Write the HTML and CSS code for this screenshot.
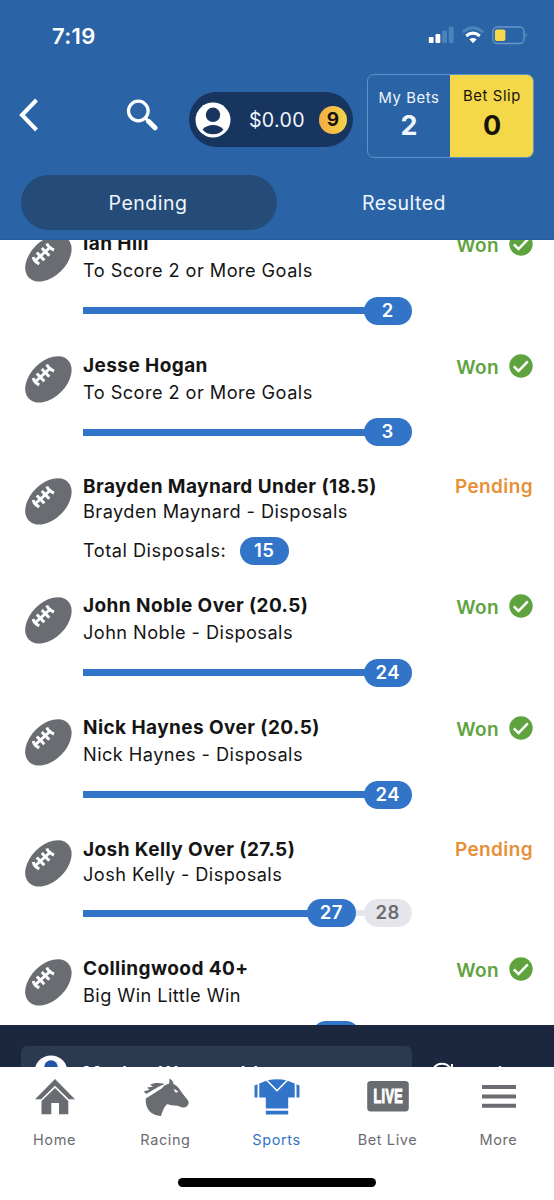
FILE: index.html
```html
<!DOCTYPE html>
<html lang="en">
<head>
<meta charset="utf-8">
<title>My Bets</title>
<link rel="stylesheet" href="styles.css">
</head>
<body>
<svg class="defs" width="0" height="0">
  <defs>
    <symbol id="ball" viewBox="0 0 47 47">
      <ellipse cx="23.400" cy="23.400" rx="27.500" ry="17.900" transform="rotate(-45 23.400 23.400)" fill="#696c71"/>
      <g stroke="#fff" stroke-width="3" fill="none">
        <path d="M10.500 25.500L26 11.500"/>
        <path d="M8.300 22Q9 26.500 14.300 28.800"/>
        <path d="M11.800 17.500L19.300 25.300"/>
        <path d="M16.800 13L24.300 20.800"/>
        <path d="M21.800 8.500Q23.500 13 29 15"/>
      </g>
    </symbol>
    <symbol id="check" viewBox="0 0 24 24">
      <circle cx="12" cy="12" r="11.700" fill="#5fa33f"/>
      <path d="M4.800 12.400L9.500 17L18.800 7.300" stroke="#fff" stroke-width="2.500" fill="none"/>
    </symbol>
    <symbol id="user" viewBox="0 0 36 36">
      <circle cx="18" cy="18" r="17.500" fill="#fff"/>
      <circle cx="18" cy="12.800" r="7.200" fill="currentColor"/>
      <path d="M7.500 27.500C10 24.500 14 23 18 23S26 24.500 28.500 27.500C26 31 22 32.300 18 32.300S10 31 7.500 27.500Z" fill="currentColor"/>
    </symbol>
  </defs>
</svg>
<div class="phone">
  <header class="header">
    <div class="status-bar">
      <span class="time">7:19</span>
      <svg class="signals" width="100" height="20" viewBox="0 0 100 20">
        <g fill="#fff"><rect x="0.800" y="12" width="4.800" height="6" rx="1"/><rect x="7.500" y="9" width="4.800" height="9" rx="1"/></g>
        <g fill="#4c83ba"><rect x="14.200" y="5.500" width="4.800" height="12.500" rx="1"/><rect x="20.800" y="1.500" width="4.800" height="16.500" rx="1"/></g>
        <g fill="none"><path d="M34.800 7.200Q45 -1.500 55.200 7.200" stroke="#4c83ba" stroke-width="3"/><path d="M38.200 11Q45 5.200 51.800 11" stroke="#fff" stroke-width="3"/></g>
        <path d="M41.400 14.300Q45 11.600 48.600 14.300L45 18.300Z" fill="#fff"/>
        <rect x="64.800" y="2" width="31.200" height="16.500" rx="4.500" fill="none" stroke="#6796c6" stroke-width="1.300"/>
        <rect x="66.900" y="4.500" width="10.500" height="11.500" rx="2" fill="#f4d849"/>
        <path d="M97.600 7.700Q99.900 10.200 97.600 12.700Z" fill="#6796c6"/>
      </svg>
    </div>
    <div class="toolbar">
      <svg class="back" width="20" height="34" viewBox="0 0 20 34"><path d="M18.500 2L4 17L18.500 32" fill="none" stroke="#fff" stroke-width="4"/></svg>
      <svg class="search" width="32" height="32" viewBox="0 0 32 32"><circle cx="12.300" cy="12" r="9.800" fill="none" stroke="#fff" stroke-width="3.300"/><path d="M19 18.800L22 21.800" stroke="#fff" stroke-width="3"/><path d="M22.500 22.300L29 28.800" stroke="#fff" stroke-width="5" stroke-linecap="round"/></svg>
      <div class="account">
        <svg class="avatar" width="36" height="36"><use href="#user"/></svg>
        <span class="balance">$0.00</span>
        <span class="coin">9</span>
      </div>
      <div class="counters">
        <div class="counter"><span class="label label-bets">My Bets</span><b>2</b></div>
        <div class="counter slip"><span class="label">Bet Slip</span><b>0</b></div>
      </div>
    </div>
    <nav class="tabs"><span class="tab active">Pending</span><span class="tab">Resulted</span></nav>
  </header>

  <main class="bets">
    <article class="leg">
      <svg class="ball" width="47" height="47"><use href="#ball"/></svg>
      <div class="info"><h2>Ian Hill</h2><p>To Score 2 or More Goals</p><div class="track"><i class="line"></i><b class="pill">2</b></div></div>
      <div class="result"><span>Won</span><svg width="24" height="24"><use href="#check"/></svg></div>
    </article>
    <article class="leg">
      <svg class="ball" width="47" height="47"><use href="#ball"/></svg>
      <div class="info"><h2>Jesse Hogan</h2><p>To Score 2 or More Goals</p><div class="track"><i class="line"></i><b class="pill">3</b></div></div>
      <div class="result"><span>Won</span><svg width="24" height="24"><use href="#check"/></svg></div>
    </article>
    <article class="leg pending">
      <svg class="ball" width="47" height="47"><use href="#ball"/></svg>
      <div class="info"><h2>Brayden Maynard Under (18.5)</h2><p>Brayden Maynard - Disposals</p><div class="track"><span class="total">Total Disposals:</span><b class="pill">15</b></div></div>
      <div class="result"><span>Pending</span></div>
    </article>
    <article class="leg">
      <svg class="ball" width="47" height="47"><use href="#ball"/></svg>
      <div class="info"><h2>John Noble Over (20.5)</h2><p>John Noble - Disposals</p><div class="track"><i class="line"></i><b class="pill">24</b></div></div>
      <div class="result"><span>Won</span><svg width="24" height="24"><use href="#check"/></svg></div>
    </article>
    <article class="leg">
      <svg class="ball" width="47" height="47"><use href="#ball"/></svg>
      <div class="info"><h2>Nick Haynes Over (20.5)</h2><p>Nick Haynes - Disposals</p><div class="track"><i class="line"></i><b class="pill">24</b></div></div>
      <div class="result"><span>Won</span><svg width="24" height="24"><use href="#check"/></svg></div>
    </article>
    <article class="leg pending">
      <svg class="ball" width="47" height="47"><use href="#ball"/></svg>
      <div class="info"><h2>Josh Kelly Over (27.5)</h2><p>Josh Kelly - Disposals</p><div class="track"><i class="line"></i><b class="pill">27</b><i class="gap"></i><b class="pill target">28</b></div></div>
      <div class="result"><span>Pending</span></div>
    </article>
    <article class="leg">
      <svg class="ball" width="47" height="47"><use href="#ball"/></svg>
      <div class="info"><h2>Collingwood 40+</h2><p>Big Win Little Win</p><div class="track margin"><i class="line"></i><b class="pill"></b></div></div>
      <div class="result"><span>Won</span><svg width="24" height="24"><use href="#check"/></svg></div>
    </article>
  </main>

  <section class="dock">
    <div class="match">
      <svg class="match-user" width="34" height="34"><use href="#user"/></svg>
      <span>Marlon Warnambl</span>
    </div>
    <div class="switch"><svg width="24" height="24" viewBox="0 0 24 24"><path d="M3 16A10 10 0 1 1 21 16M22 2V7H17" fill="none" stroke="#fff" stroke-width="2"/></svg><span>Switch</span></div>
  </section>

  <footer class="nav">
    <div class="items">
      <div class="item">
        <svg width="48" height="42" viewBox="0 0 48 42" fill="#696c71"><path d="M24 3L44 23.300H37.800L24 9.700L10.200 23.300H4Z"/><path d="M24 12L37.300 25V38.300H28V27H20.300V38.300H10.500V25Z"/></svg>
        <span>Home</span>
      </div>
      <div class="item">
        <svg width="48" height="42" viewBox="1.500 0 48 42" fill="#696c71"><path d="M24.300 8C18 6.300 12 7.200 9.800 8.700L12.500 10.700L6.500 11.500L9 13.800L3 15.500L5.800 17.700L4 19L18.500 10.500Z"/><path d="M29 2.500C31.800 4 32.800 6 32.800 8C36.500 9.300 38.500 12 40.500 15.500L47.500 24.500C49.300 28 47 31 43.200 31.400C40.500 31.700 39.300 30.200 37 29.700C33 29.500 29 29 27 28C23.500 30.500 22.300 35 20.500 40C10.500 39.500 4.500 33 5.300 22.500L21.500 12.200C23.500 9.500 25.500 8.500 28.700 7.600Z"/><path d="M33.300 12.800L37.800 15.500Q34.500 18.300 33.300 12.800Z" fill="#fff"/></svg>
        <span>Racing</span>
      </div>
      <div class="item current">
        <svg width="48" height="42" viewBox="0 0 48 42" fill="#3274c8"><path d="M1.500 9.500L4.500 8.300V21.500H1.500Z"/><path d="M6.300 7.500L14.500 4.200Q24 2.500 33.500 4.200L41.700 7.500V21.500H35.200V32.500H12.800V21.500H6.300Z"/><path d="M43.500 8.300L46.500 9.500V21.500H43.500Z"/><path d="M12.800 34.700H35.200V38.500H12.800Z"/><path d="M13.500 4L24 14.700L34.500 4" stroke="#fff" stroke-width="1.600" fill="none"/></svg>
        <span>Sports</span>
      </div>
      <div class="item">
        <svg width="48" height="42" viewBox="0 0 48 42"><rect x="3.200" y="5" width="41.600" height="30.500" rx="3.500" fill="#696c71"/><text x="9.500" y="27.400" textLength="29.500" lengthAdjust="spacingAndGlyphs" class="live">LIVE</text></svg>
        <span>Bet Live</span>
      </div>
      <div class="item">
        <svg width="48" height="42" viewBox="0 0 48 42" fill="#696c71"><path d="M7 9H41V13H7ZM7 18.500H41V22.400H7ZM7 27.700H41V31.700H7Z"/></svg>
        <span>More</span>
      </div>
    </div>
    <div class="home-indicator"></div>
  </footer>
</div>
</body>
</html>
```

FILE: styles.css
```css
* { box-sizing: border-box; }
body { margin: 0; background: #fff; font-family: Inter, "Liberation Sans", sans-serif; }
.defs { display: block; }
svg { flex: none; display: block; }
.phone { width: 554px; height: 1200px; display: flex; flex-direction: column; overflow: hidden; }

.header { flex: none; height: 240px; background: #2b64a6; color: #eff6fd; border-bottom: 1px solid #275c99; }
.status-bar { height: 74px; padding: 25px 26px 0 52px; display: flex; justify-content: space-between; }
.time { font-size: 22px; font-weight: 600; line-height: 22px; letter-spacing: .3px; color: #fff; }
.signals { margin-left: auto; }
.toolbar { height: 101px; display: flex; align-items: flex-start; }
.back { margin: 24px 0 0 18px; }
.search { margin: 25px 0 0 88px; }
.account { margin: 18px 0 0 31px; width: 164px; height: 55px; border-radius: 28px; background: #18355f; display: flex; align-items: center; padding: 0 6px; }
.avatar { color: #18355f; }
.balance { margin-left: 18px; width: 70px; font-size: 19.600px; letter-spacing: .3px; line-height: 24px; }
.coin { width: 28px; height: 28px; border-radius: 50%; background: linear-gradient(90deg, #f2ad45, #f4d34a); color: #17130b; font-size: 19px; font-weight: 700; line-height: 27px; text-align: center; }
.counters { margin-left: 14px; width: 167px; height: 84px; display: flex; border: 1.500px solid #5c92c9; border-radius: 7px; overflow: hidden; }
.counter { width: 82px; display: flex; flex-direction: column; align-items: center; padding-top: 13px; }
.counter.slip { background: #f4d849; color: #17130b; margin: -1px -1px -1px 0; flex: 1; }
.label { font-size: 14.800px; line-height: 18px; letter-spacing: .6px; }
.label-bets { position: relative; top: 1px; }
.counter b { font-size: 27px; line-height: 40px; }
.slip b { line-height: 42px; }
.tabs { display: flex; padding: 0 21px; }
.tab { width: 256px; height: 55px; border-radius: 28px; font-size: 19.500px; line-height: 56px; letter-spacing: .5px; text-align: center; padding-right: 2px; }
.tab.active { background: #254c78; }

.bets { height: 785px; overflow: hidden; background: #fff; }
.leg { height: 121.700px; display: flex; padding: 0 21px 0 25px; color: #151515; }
.leg:first-child { margin-top: -9px; }
.leg.pending { height: 118.900px; }
.ball { margin-top: 3.700px; }
.info { width: 329px; margin-left: 11px; }
.info h2, .info p { margin: 0; white-space: nowrap; }
.info h2 { font-size: 19px; font-weight: 700; letter-spacing: .42px; line-height: 25px; height: 28px; }
.info p { font-size: 18.200px; font-weight: 400; letter-spacing: .44px; line-height: 22px; height: 24px; }
.pending .info h2 { height: 25px; }
.pending .info p { line-height: 25px; }
.track { height: 28px; margin-top: 13.700px; display: flex; align-items: center; }
.line { flex: 1; height: 7px; background: #3274c8; margin-right: -1px; }
.gap { width: 9px; height: 6px; background: #e5e6ec; margin-right: -1px; }
.pill { width: 48.500px; height: 28px; border-radius: 14px; background: #3274c8; color: #fff; font-size: 18.500px; font-weight: 600; line-height: 26px; letter-spacing: .5px; text-align: center; }
.pill.target { background: #e5e6ec; color: #696c71; }
.margin { padding-right: 52px; }
.total { font-size: 18.200px; letter-spacing: .5px; width: 157px; line-height: 26px; padding-bottom: 2px; }
.result { flex: 1; display: flex; justify-content: flex-end; gap: 10px; font-size: 19px; font-weight: 600; line-height: 29px; color: #5fa33f; letter-spacing: .4px; }
.result svg { margin-top: 1px; }
.result span { white-space: nowrap; }
.pending .result { color: #e79037; line-height: 25px; }

.dock { height: 42px; background: #1a273e; display: flex; padding: 21px 21px 0; overflow: hidden; color: #fff; }
.match { width: 391px; height: 80px; border-radius: 6px; background: #2b3951; display: flex; padding: 9px 13px; font-size: 19px; font-weight: 600; letter-spacing: .9px; }
.match-user { color: #2055a5; }
.match span { margin: 7px 0 0 15px; }
.switch { display: flex; margin-left: 18px; padding-top: 16px; gap: 16px; font-size: 19px; line-height: 26px; }

.nav { height: 133px; background: #fff; color: #696c71; }
.items { display: flex; padding: 9px 0 0; margin-left: -1px; }
.item { width: 111px; display: flex; flex-direction: column; align-items: center; font-size: 14.500px; letter-spacing: .6px; }
.item span { margin-top: 12px; line-height: 20px; }
.current { color: #3274c8; }
.live { font-family: "Liberation Sans", sans-serif; font-size: 20px; font-weight: 700; fill: #fff; stroke: #fff; stroke-width: 1.200px; }
.home-indicator { width: 198px; height: 9px; border-radius: 5px; background: #000; margin: 28px auto 0; }
```
